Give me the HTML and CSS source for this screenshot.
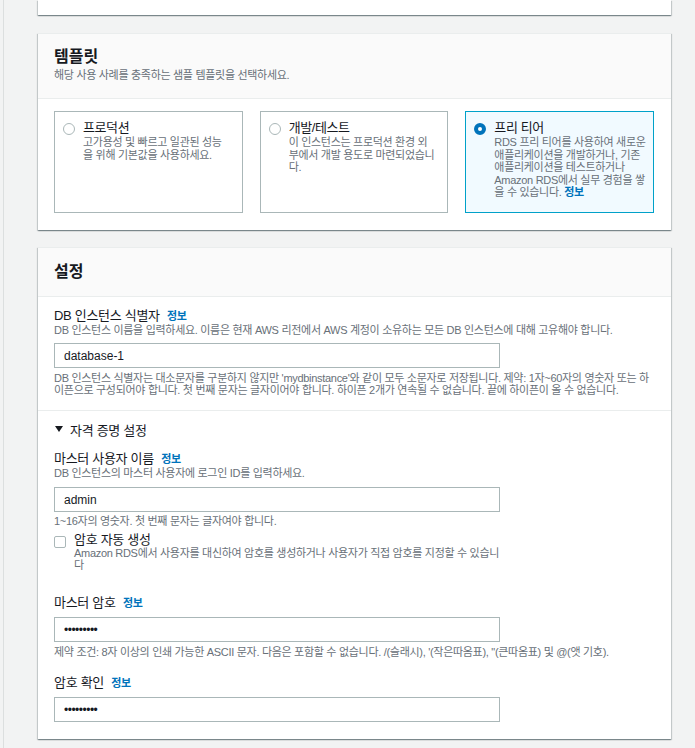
FILE: index.html
```html
<!DOCTYPE html>
<html lang="ko">
<head>
  <meta charset="UTF-8">
  <meta name="viewport" content="width=device-width, initial-scale=1.0">
  <title>데이터베이스 생성</title>
  <link rel="stylesheet" href="styles.css">
</head>
<body>

<div class="layout">
  <div class="rail"></div>

  <main class="main">
    <section class="card card-top"></section>

    <!-- 템플릿 -->
    <section class="card">
      <header class="card-head">
        <h2 class="card-title">템플릿</h2>
        <p class="card-sub">해당 사용 사례를 충족하는 샘플 템플릿을 선택하세요.</p>
      </header>
      <div class="tiles">
        <div class="tile">
          <span class="radio"></span>
          <div class="tile-text">
            <div class="tile-title">프로덕션</div>
            <div class="tile-desc">고가용성 및 빠르고 일관된 성능<br>을 위해 기본값을 사용하세요.</div>
          </div>
        </div>
        <div class="tile">
          <span class="radio"></span>
          <div class="tile-text">
            <div class="tile-title">개발/테스트</div>
            <div class="tile-desc">이 인스턴스는 프로덕션 환경 외<br>부에서 개발 용도로 마련되었습니<br>다.</div>
          </div>
        </div>
        <div class="tile selected">
          <span class="radio"></span>
          <div class="tile-text">
            <div class="tile-title">프리 티어</div>
            <div class="tile-desc">RDS 프리 티어를 사용하여 새로운<br>애플리케이션을 개발하거나, 기존<br>애플리케이션을 테스트하거나<br>Amazon RDS에서 실무 경험을 쌓<br>을 수 있습니다. <a class="info" href="#">정보</a></div>
          </div>
        </div>
      </div>
    </section>

    <!-- 설정 -->
    <section class="card">
      <header class="card-head card-head-small">
        <h2 class="card-title">설정</h2>
      </header>

      <div class="section">
        <div class="label">DB 인스턴스 식별자 <a class="info" href="#">정보</a></div>
        <div class="desc">DB 인스턴스 이름을 입력하세요. 이름은 현재 AWS 리전에서 AWS 계정이 소유하는 모든 DB 인스턴스에 대해 고유해야 합니다.</div>
        <input class="input" type="text" value="database-1">
        <div class="hint">DB 인스턴스 식별자는 대소문자를 구분하지 않지만 'mydbinstance'와 같이 모두 소문자로 저장됩니다. 제약: 1자~60자의 영숫자 또는 하<br>이픈으로 구성되어야 합니다. 첫 번째 문자는 글자이어야 합니다. 하이픈 2개가 연속될 수 없습니다. 끝에 하이픈이 올 수 없습니다.</div>
      </div>

      <div class="section section-last">
        <div class="expander">
          <svg width="8" height="6" viewBox="0 0 8 6"><polygon points="0,0 8,0 4,6" fill="#16191f"/></svg>
          <span>자격 증명 설정</span>
        </div>

        <div class="field">
          <div class="label">마스터 사용자 이름 <a class="info" href="#">정보</a></div>
          <div class="desc">DB 인스턴스의 마스터 사용자에 로그인 ID를 입력하세요.</div>
          <input class="input" type="text" value="admin">
          <div class="hint hint-tight">1~16자의 영숫자. 첫 번째 문자는 글자여야 합니다.</div>
        </div>

        <div class="check-row">
          <span class="checkbox"></span>
          <div>
            <div class="label">암호 자동 생성</div>
            <div class="check-desc">Amazon RDS에서 사용자를 대신하여 암호를 생성하거나 사용자가 직접 암호를 지정할 수 있습니<br>다</div>
          </div>
        </div>

        <div class="field field-pw">
          <div class="label">마스터 암호 <a class="info" href="#">정보</a></div>
          <input class="input input-nodesc input-pw" type="password" value="123456789">
          <div class="hint">제약 조건: 8자 이상의 인쇄 가능한 ASCII 문자. 다음은 포함할 수 없습니다. /(슬래시), '(작은따옴표), "(큰따옴표) 및 @(앳 기호).</div>
        </div>

        <div class="field field-confirm">
          <div class="label">암호 확인 <a class="info" href="#">정보</a></div>
          <input class="input input-nodesc input-pw" type="password" value="123456789">
        </div>
      </div>
    </section>
  </main>
</div>

</body>
</html>
```

FILE: styles.css
```css
body {
  margin: 0;
  background: #f2f3f3;
  color: #16191f;
  font-family: "Liberation Sans", "Noto Sans CJK KR", sans-serif;
  font-size: 11px;
  letter-spacing: -0.3px;
}

.layout {
  display: flex;
  min-height: 748px;
}

.rail {
  width: 3px;
  border-right: 1px solid #dcdfdf;
}

.main {
  width: 633px;
  margin-left: 34px;
}

/* tarjetas */
.card {
  background: #fff;
  border-top: 1px solid #eaeded;
  box-shadow: 0 1px 1px 0 rgba(0, 28, 36, 0.3), 1px 1px 1px 0 rgba(0, 28, 36, 0.15), -1px 1px 1px 0 rgba(0, 28, 36, 0.15);
  margin-bottom: 17px;
}

.card-top {
  height: 15px;
  border-top: none;
  margin-bottom: 18px;
}

.card-head {
  background: #fafafa;
  border-bottom: 1px solid #eaeded;
  padding: 13px 16px 16px;
}

.card-head-small {
  padding: 14px 16px 14px;
}

.card-title {
  margin: 0;
  font-size: 16px;
  line-height: 20px;
  font-weight: 700;
  letter-spacing: 0;
}

.card-sub {
  margin: 1px 0 0;
  line-height: 14px;
  color: #687078;
}

.info {
  color: #0073bb;
  font-weight: 700;
  font-size: 11px;
  letter-spacing: -0.3px;
  text-decoration: none;
  margin-left: 4px;
}

/* plantillas */
.tiles {
  display: grid;
  grid-template-columns: repeat(3, 1fr);
  gap: 17px;
  padding: 12px 17px 17px 16px;
}

.tile {
  display: flex;
  gap: 8px;
  border: 1px solid #aab7b8;
  padding: 8px 4px 13px 8px;
  min-height: 102px;
  box-sizing: border-box;
}

.tile.selected {
  border-color: #00a1c9;
  background: #f1faff;
}

.radio {
  flex: none;
  width: 12px;
  height: 12px;
  margin-top: 3px;
  border: 1px solid #aab7b8;
  border-radius: 50%;
  background: #fff;
  box-sizing: border-box;
}

.tile.selected .radio {
  border: 4px solid #0073bb;
}

.tile-title {
  font-size: 13px;
  line-height: 16px;
  letter-spacing: -0.4px;
}

.tile-desc {
  line-height: 12.5px;
  color: #687078;
  white-space: nowrap;
}

.tile-desc .info {
  margin-left: 0;
}

/* ajustes */
.section {
  padding: 12px 16px 14px;
}

.section-last {
  border-top: 1px solid #eaeded;
  padding: 9px 16px 17px;
}

.label {
  font-size: 13px;
  line-height: 14px;
  letter-spacing: -0.3px;
}

.desc {
  line-height: 14px;
  color: #687078;
}

.input {
  display: block;
  width: 446px;
  height: 25px;
  box-sizing: border-box;
  margin: 6px 0 0;
  padding: 0 9px;
  border: 1px solid #aab7b8;
  border-radius: 0;
  background: #fff;
  color: #16191f;
  font-family: "Liberation Sans", sans-serif;
  font-size: 12px;
}

.input-nodesc {
  margin-top: 7px;
}

.input-pw {
  letter-spacing: -0.5px;
}

.hint {
  margin-top: 4px;
  line-height: 12px;
  color: #687078;
  white-space: nowrap;
}

.hint-tight {
  margin-top: 3px;
}

.expander {
  display: flex;
  align-items: center;
  gap: 7px;
  height: 18px;
  padding-left: 1px;
  font-size: 13px;
  letter-spacing: -0.3px;
}

.field {
  margin-top: 14px;
}

.field .input {
  margin-top: 7px;
}

.check-row {
  display: flex;
  gap: 8px;
  margin-top: 6px;
}

.checkbox {
  flex: none;
  width: 12px;
  height: 12px;
  margin-top: 3px;
  border: 1px solid #aab7b8;
  border-radius: 2px;
  box-sizing: border-box;
  background: #fff;
}

.check-desc {
  line-height: 12px;
  color: #687078;
  white-space: nowrap;
}

.field-pw {
  margin-top: 25px;
}

.field-confirm {
  margin-top: 18px;
}
```
